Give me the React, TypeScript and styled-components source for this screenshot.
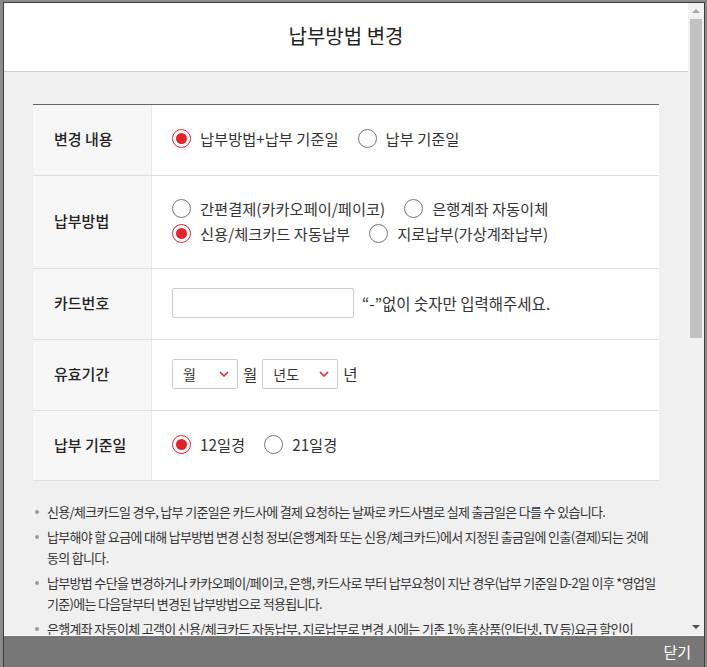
import React from 'react';
import styled, { createGlobalStyle } from 'styled-components';

const GlobalStyle = createGlobalStyle`
  html, body {
    margin: 0;
    padding: 0;
    background: #8b8b8b;
  }
  body {
    font-family: "Noto Sans CJK KR", "Noto Sans", sans-serif;
    color: #333;
  }
  * {
    box-sizing: border-box;
  }
`;

const red = '#e1242b';

const Backdrop = styled.div`
  height: 667px;
  padding: 2px 2px 0 3px;
`;

const Modal = styled.div`
  display: flex;
  flex-direction: column;
  height: 665px;
  border: 1px solid #3c3c3c;
  border-bottom: none;
  background: #f0f0f0;
`;

const Main = styled.div`
  flex: 1;
  display: flex;
  min-height: 0;
  border-bottom: 1px solid #fff;
`;

const Scroller = styled.div`
  flex: 1;
  overflow: hidden;
`;

/* drawn scrollbar: the headless browser hides native ones */
const ScrollBar = styled.div`
  width: 16px;
  display: flex;
  flex-direction: column;
  background: #f1f1f1;
`;

const ScrollArrow = styled.div<{ $down?: boolean }>`
  height: 16px;
  display: flex;
  align-items: center;
  justify-content: center;
  margin-top: ${(p) => (p.$down ? 'auto' : '0')};

  &::after {
    content: '';
    width: 0;
    height: 0;
    border-left: 4px solid transparent;
    border-right: 4px solid transparent;
    ${(p) => (p.$down ? 'border-top: 4px solid #505050;' : 'border-bottom: 4px solid #a3a3a3;')}
  }
`;

const ScrollThumb = styled.div`
  height: 319px;
  margin: 0 2px;
  background: #c1c1c1;
`;

const Header = styled.header`
  height: 69px;
  display: flex;
  align-items: center;
  justify-content: center;
  padding-bottom: 4px;
  background: #fff;
  border-bottom: 1px solid #cfcfcf;
`;

const Title = styled.h1`
  margin: 0;
  font-size: 20px;
  font-weight: 400;
  color: #222;
`;

const Body = styled.div`
  padding: 32px 29px 40px 29px;
`;

const Table = styled.div`
  border-top: 1px solid #666;
  background: #fff;
`;

const Row = styled.div<{ $h: number }>`
  display: grid;
  grid-template-columns: 119px 1fr;
  min-height: ${(p) => p.$h}px;
  border-bottom: 1px solid #dedede;
`;

const Label = styled.div`
  display: flex;
  align-items: center;
  padding: 0 0 3px 21px;
  background: #f7f7f7;
  border-right: 1px solid #e6e6e6;
  font-size: 15px;
  font-weight: 500;
  color: #222;
`;

const Cell = styled.div`
  display: flex;
  flex-direction: column;
  justify-content: center;
  gap: 6px;
  padding: 0 20px 3px;
`;

const Line = styled.div`
  display: flex;
  align-items: center;
  gap: 19px;
`;

const Option = styled.label`
  display: inline-flex;
  align-items: center;
  gap: 9px;
  font-size: 15.3px;
  color: #333;
  line-height: 19px;
  white-space: nowrap;
`;

const RadioMark = styled.span<{ $on?: boolean }>`
  position: relative;
  width: 19px;
  height: 19px;
  border-radius: 50%;
  border: 1px solid ${(p) => (p.$on ? red : '#777')};
  background: #fff;
  flex-shrink: 0;

  &::after {
    content: '';
    display: ${(p) => (p.$on ? 'block' : 'none')};
    position: absolute;
    top: 3px;
    left: 3px;
    width: 11px;
    height: 11px;
    border-radius: 50%;
    background: ${red};
  }
`;

const Inline = styled.div`
  display: flex;
  align-items: center;
  gap: 5px;
  font-size: 15.5px;
  color: #333;
`;

const TextInput = styled.input`
  width: 182px;
  height: 30px;
  margin-right: 3px;
  border: 1px solid #cdcdcd;
  border-radius: 2px;
  background: #fff;
  outline: none;
`;

const Hint = styled.span`
  font-size: 15.5px;
  color: #333;
`;

const SelectBox = styled.div<{ $w: number }>`
  display: flex;
  align-items: center;
  justify-content: space-between;
  width: ${(p) => p.$w}px;
  height: 30px;
  padding: 0 8px 0 10px;
  border: 1px solid #cdcdcd;
  border-radius: 2px;
  background: #fff;
  font-size: 14px;
  color: #333;
`;

const Chevron = () => (
  <svg width="10" height="6" viewBox="0 0 10 6" fill="none">
    <path d="M1 1l4 4 4-4" stroke={red} strokeWidth="1.5" />
  </svg>
);

const Notes = styled.ul`
  margin: 20px 0 0;
  padding: 0 0 0 14px;
  list-style: none;
`;

const Note = styled.li`
  position: relative;
  margin-bottom: 4px;
  font-size: 13px;
  line-height: 21px;
  letter-spacing: -0.68px;
  word-break: keep-all;
  color: #333;

  &::before {
    content: '';
    position: absolute;
    left: -12px;
    top: 9px;
    width: 4px;
    height: 4px;
    border-radius: 50%;
    background: #9a9a9a;
  }
`;

const Actions = styled.div`
  display: flex;
  justify-content: center;
  gap: 8px;
  margin-top: 30px;
`;

const ActionButton = styled.button<{ $primary?: boolean }>`
  width: 120px;
  height: 44px;
  border: 1px solid ${(p) => (p.$primary ? red : '#999')};
  background: ${(p) => (p.$primary ? red : '#fff')};
  color: ${(p) => (p.$primary ? '#fff' : '#333')};
  font-family: inherit;
  font-size: 15px;
`;

const Footer = styled.footer`
  height: 31px;
  display: flex;
  align-items: center;
  justify-content: flex-end;
  padding-right: 13px;
  background: #777;
`;

const CloseButton = styled.button`
  border: none;
  background: none;
  padding: 0;
  color: #fff;
  font-family: inherit;
  font-size: 15px;
  cursor: pointer;
`;

const Radio: React.FC<{ on?: boolean; children: React.ReactNode }> = ({ on, children }) => (
  <Option>
    <RadioMark $on={on} />
    {children}
  </Option>
);

const notes = [
  '신용/체크카드일 경우, 납부 기준일은 카드사에 결제 요청하는 날짜로 카드사별로 실제 출금일은 다를 수 있습니다.',
  '납부해야 할 요금에 대해 납부방법 변경 신청 정보(은행계좌 또는 신용/체크카드)에서 지정된 출금일에 인출(결제)되는 것에 동의 합니다.',
  '납부방법 수단을 변경하거나 카카오페이/페이코, 은행, 카드사로 부터 납부요청이 지난 경우(납부 기준일 D-2일 이후 *영업일 기준)에는 다음달부터 변경된 납부방법으로 적용됩니다.',
  '은행계좌 자동이체 고객이 신용/체크카드 자동납부, 지로납부로 변경 시에는 기존 1% 홈상품(인터넷, TV 등)요금 할인이 중단됩니다.',
  '간편결제(카카오페이/페이코) 자동납부 신청 시 해당 서비스에 등록된 결제수단으로 요금이 결제됩니다.',
  '지로납부(가상계좌납부)로 변경 시 매월 청구서에 안내된 가상계좌로 납부 기준일까지 요금을 납부해 주셔야 합니다.',
  '카드 유효기간이 만료되거나 한도 초과 등으로 결제가 되지 않을 경우 미납이 발생할 수 있으니 유의하시기 바랍니다.',
];

export default function App() {
  return (
    <>
      <GlobalStyle />
      <Backdrop>
        <Modal>
          <Main>
            <Scroller>
              <Header>
                <Title>납부방법 변경</Title>
              </Header>
              <Body>
                <Table>
                  <Row $h={71}>
                    <Label>변경 내용</Label>
                    <Cell>
                      <Line>
                        <Radio on>납부방법+납부 기준일</Radio>
                        <Radio>납부 기준일</Radio>
                      </Line>
                    </Cell>
                  </Row>
                  <Row $h={93}>
                    <Label>납부방법</Label>
                    <Cell>
                      <Line>
                        <Radio>간편결제(카카오페이/페이코)</Radio>
                        <Radio>은행계좌 자동이체</Radio>
                      </Line>
                      <Line>
                        <Radio on>신용/체크카드 자동납부</Radio>
                        <Radio>지로납부(가상계좌납부)</Radio>
                      </Line>
                    </Cell>
                  </Row>
                  <Row $h={71}>
                    <Label>카드번호</Label>
                    <Cell>
                      <Inline>
                        <TextInput type="text" />
                        <Hint>“-”없이 숫자만 입력해주세요.</Hint>
                      </Inline>
                    </Cell>
                  </Row>
                  <Row $h={71}>
                    <Label>유효기간</Label>
                    <Cell>
                      <Inline>
                        <SelectBox $w={66}>
                          월<Chevron />
                        </SelectBox>
                        월
                        <SelectBox $w={76}>
                          년도<Chevron />
                        </SelectBox>
                        년
                      </Inline>
                    </Cell>
                  </Row>
                  <Row $h={70}>
                    <Label>납부 기준일</Label>
                    <Cell>
                      <Line>
                        <Radio on>12일경</Radio>
                        <Radio>21일경</Radio>
                      </Line>
                    </Cell>
                  </Row>
                </Table>
                <Notes>
                  {notes.map((n) => (
                    <Note key={n}>{n}</Note>
                  ))}
                </Notes>
                <Actions>
                  <ActionButton>취소</ActionButton>
                  <ActionButton $primary>변경</ActionButton>
                </Actions>
              </Body>
            </Scroller>
            <ScrollBar>
              <ScrollArrow />
              <ScrollThumb />
              <ScrollArrow $down />
            </ScrollBar>
          </Main>
          <Footer>
            <CloseButton>닫기</CloseButton>
          </Footer>
        </Modal>
      </Backdrop>
    </>
  );
}
